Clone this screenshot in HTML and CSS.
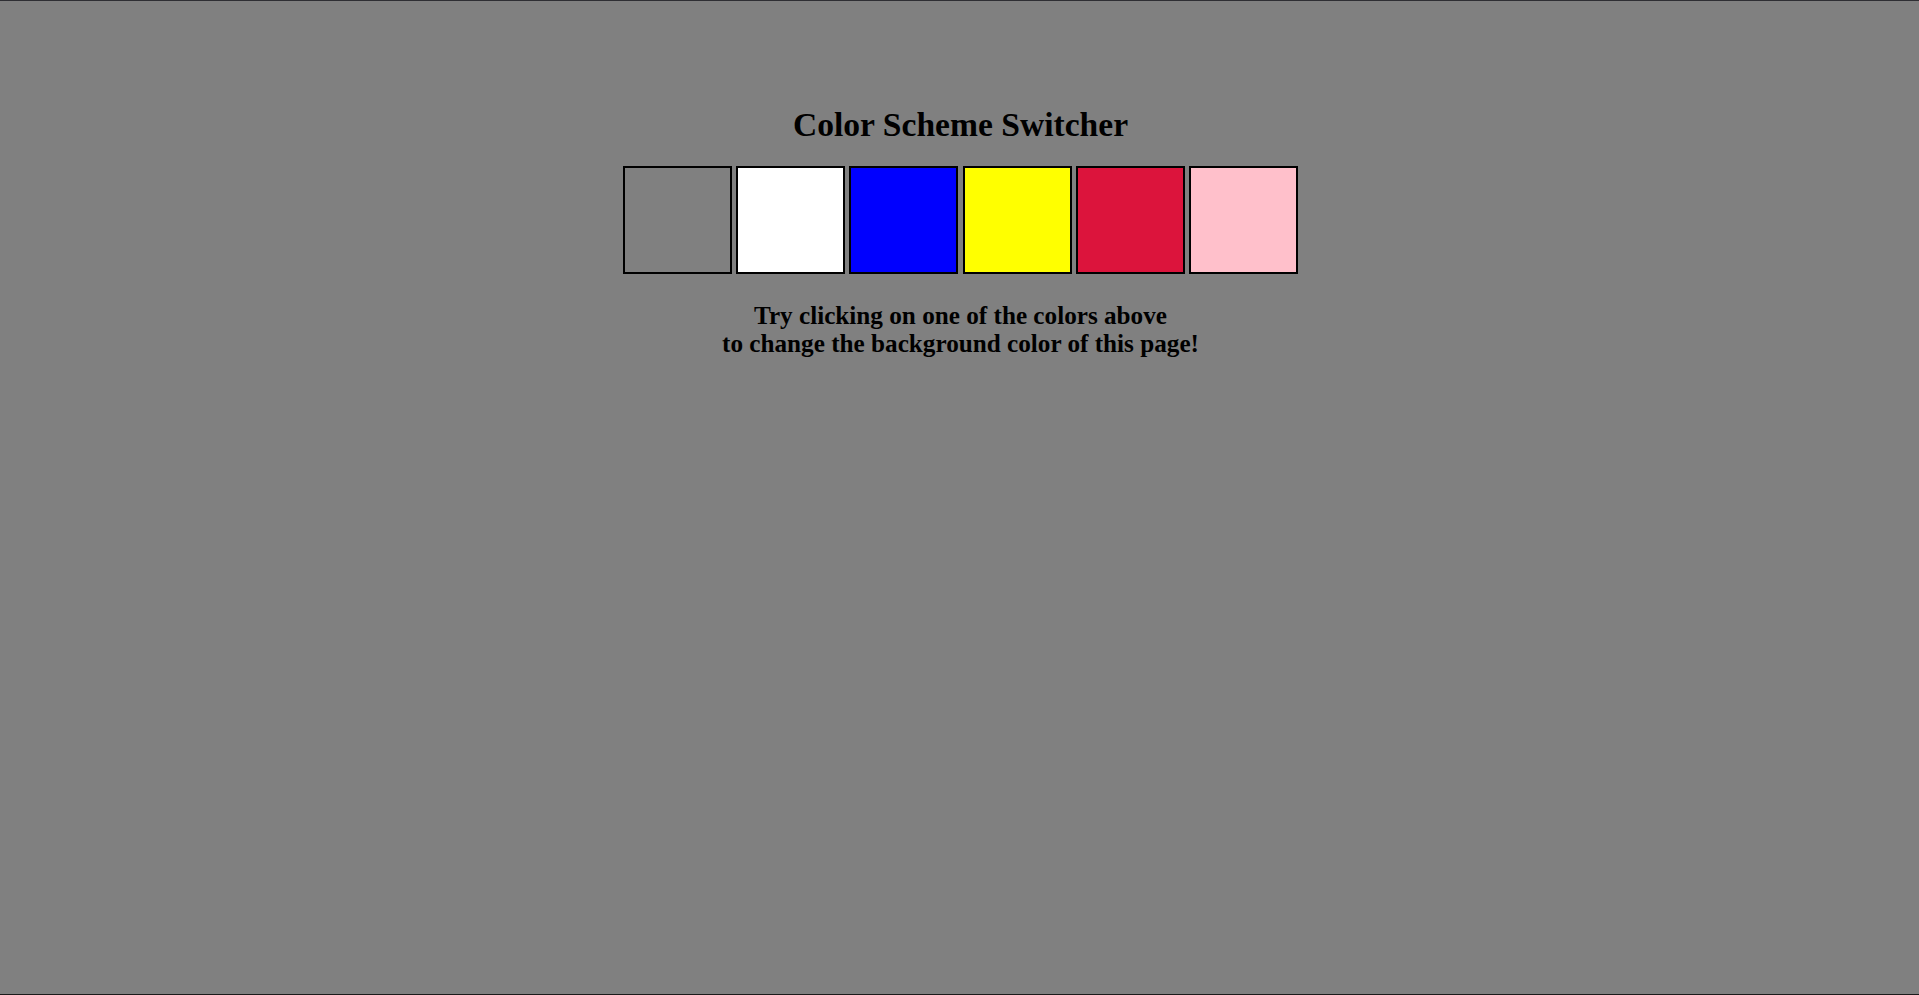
FILE: index.html
```html
<!DOCTYPE html>
<html lang="en">
<head>
<meta charset="utf-8">
<title>Color Scheme Switcher</title>
<link rel="stylesheet" href="styles.css">
</head>
<body>
<main class="page">
  <h1 class="title">Color Scheme Switcher</h1>
  <div class="swatches">
    <button class="swatch swatch-grey" aria-label="grey"></button>
    <button class="swatch swatch-white" aria-label="white"></button>
    <button class="swatch swatch-blue" aria-label="blue"></button>
    <button class="swatch swatch-yellow" aria-label="yellow"></button>
    <button class="swatch swatch-crimson" aria-label="crimson"></button>
    <button class="swatch swatch-pink" aria-label="pink"></button>
  </div>
  <p class="hint">Try clicking on one of the colors above<br>to change the background color of this page!</p>
</main>
</body>
</html>
```
FILE: styles.css
```css
html {
  height: 100%;
  box-sizing: border-box;
  border-top: 1px solid #2e2e33;
  border-bottom: 1px solid #1a1a1a;
  background: #808080;
}

body {
  margin: 0;
  font-family: "Liberation Serif", "Times New Roman", serif;
  color: #000;
}

.page {
  display: flex;
  flex-direction: column;
  align-items: center;
  padding: 105px 0 0 2px;
}

.title {
  margin: 0;
  font-size: 33.6px;
  font-weight: bold;
  line-height: 38px;
}

.swatches {
  display: flex;
  gap: 4.2px;
  margin-top: 22px;
}

.swatch {
  box-sizing: border-box;
  width: 109px;
  height: 108px;
  border: 2px solid #000;
  padding: 0;
  margin: 0;
  cursor: pointer;
}

.swatch-grey { background: #808080; }
.swatch-white { background: #ffffff; }
.swatch-blue { background: #0000ff; }
.swatch-yellow { background: #ffff00; }
.swatch-crimson { background: #dc143c; }
.swatch-pink { background: #ffc0cb; }

.hint {
  margin: 28px 0 0;
  font-size: 25.2px;
  font-weight: bold;
  line-height: 28px;
  text-align: center;
}
```
